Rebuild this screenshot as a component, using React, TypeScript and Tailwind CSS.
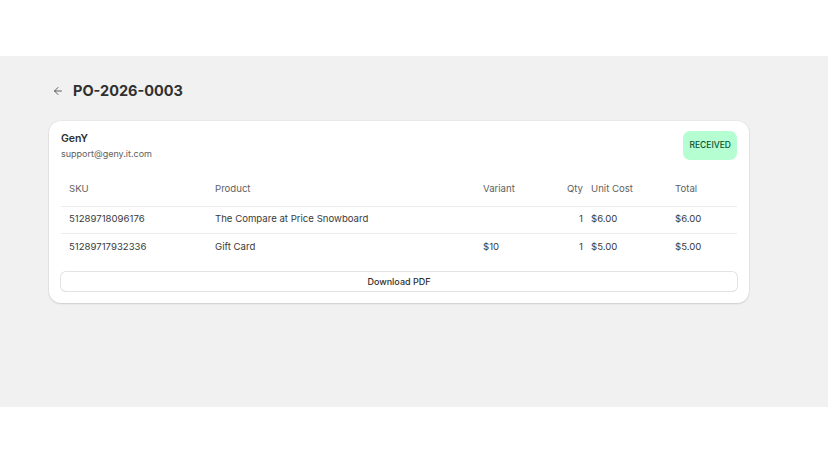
import { ArrowLeft } from 'lucide-react'

interface LineItem {
  sku: string
  product: string
  variant: string
  qty: number
  unitCost: string
  total: string
}

const items: LineItem[] = [
  { sku: '51289718096176', product: 'The Compare at Price Snowboard', variant: '', qty: 1, unitCost: '$6.00', total: '$6.00' },
  { sku: '51289717932336', product: 'Gift Card', variant: '$10', qty: 1, unitCost: '$5.00', total: '$5.00' },
]

export default function App() {
  return (
    <div className="w-[828px] h-[466px] bg-white text-[#303030]" style={{ fontFamily: 'Inter, "Noto Sans", sans-serif' }}>
      <div className="h-[56px]" />
      <div className="h-[351px] bg-[#f1f1f1] pl-[49px] pt-[24px]">
        <div className="flex items-center gap-[9px] h-[22px] pl-[3px]">
          <ArrowLeft size={12} strokeWidth={1.75} className="text-[#4a4a4a]" />
          <h1 className="text-[14.5px] font-bold text-[#303030]">PO-2026-0003</h1>
        </div>

        <div className="mt-[19px] w-[700px] rounded-[12px] bg-white p-[12px] shadow-[0_1px_2px_rgba(0,0,0,0.12),0_0_0_1px_rgba(0,0,0,0.03)]">
          <div className="flex items-start justify-between h-[27px]">
            <div>
              <div className="text-[10.5px] font-semibold leading-[12px] text-[#303030]">GenY</div>
              <div className="mt-[3px] text-[9px] leading-[12px] text-[#616161]">support@geny.it.com</div>
            </div>
            <span className="mt-[-2px] flex h-[29px] items-center rounded-[7px] bg-[#b4fed2] px-[6px] text-[8.5px] font-medium text-[#0c5132]">
              RECEIVED
            </span>
          </div>

          <table className="mt-[12px] w-full table-fixed border-collapse text-[9.6px] text-[#3a3a3a]">
            <colgroup>
              <col className="w-[146px]" />
              <col className="w-[268px]" />
              <col className="w-[76px]" />
              <col className="w-[32px]" />
              <col className="w-[84px]" />
              <col />
            </colgroup>
            <thead>
              <tr className="h-[34px] border-b border-[#ebebeb] text-[#616161]">
                <th className="px-2 text-left font-normal">SKU</th>
                <th className="px-2 text-left font-normal">Product</th>
                <th className="px-2 text-left font-normal">Variant</th>
                <th className="pl-2 pr-0 text-right font-normal">Qty</th>
                <th className="px-2 text-left font-normal">Unit Cost</th>
                <th className="px-2 text-left font-normal">Total</th>
              </tr>
            </thead>
            <tbody>
              {items.map((it, i) => (
                <tr key={it.sku} className={`${i < items.length - 1 ? 'h-[27px] border-b border-[#ebebeb]' : 'h-[27px]'}`}>
                  <td className="px-2">{it.sku}</td>
                  <td className="px-2">{it.product}</td>
                  <td className="px-2">{it.variant}</td>
                  <td className="pl-2 pr-0 text-right">{it.qty}</td>
                  <td className="px-2">{it.unitCost}</td>
                  <td className="px-2">{it.total}</td>
                </tr>
              ))}
            </tbody>
          </table>

          <button className="mt-[12px] flex h-[19px] w-full items-center justify-center rounded-[5px] bg-white text-[9px] font-medium text-[#303030] shadow-[0_0_0_1px_#e3e3e3,0_1px_0_#c8c8c8]">
            Download PDF
          </button>
        </div>
      </div>
    </div>
  )
}
